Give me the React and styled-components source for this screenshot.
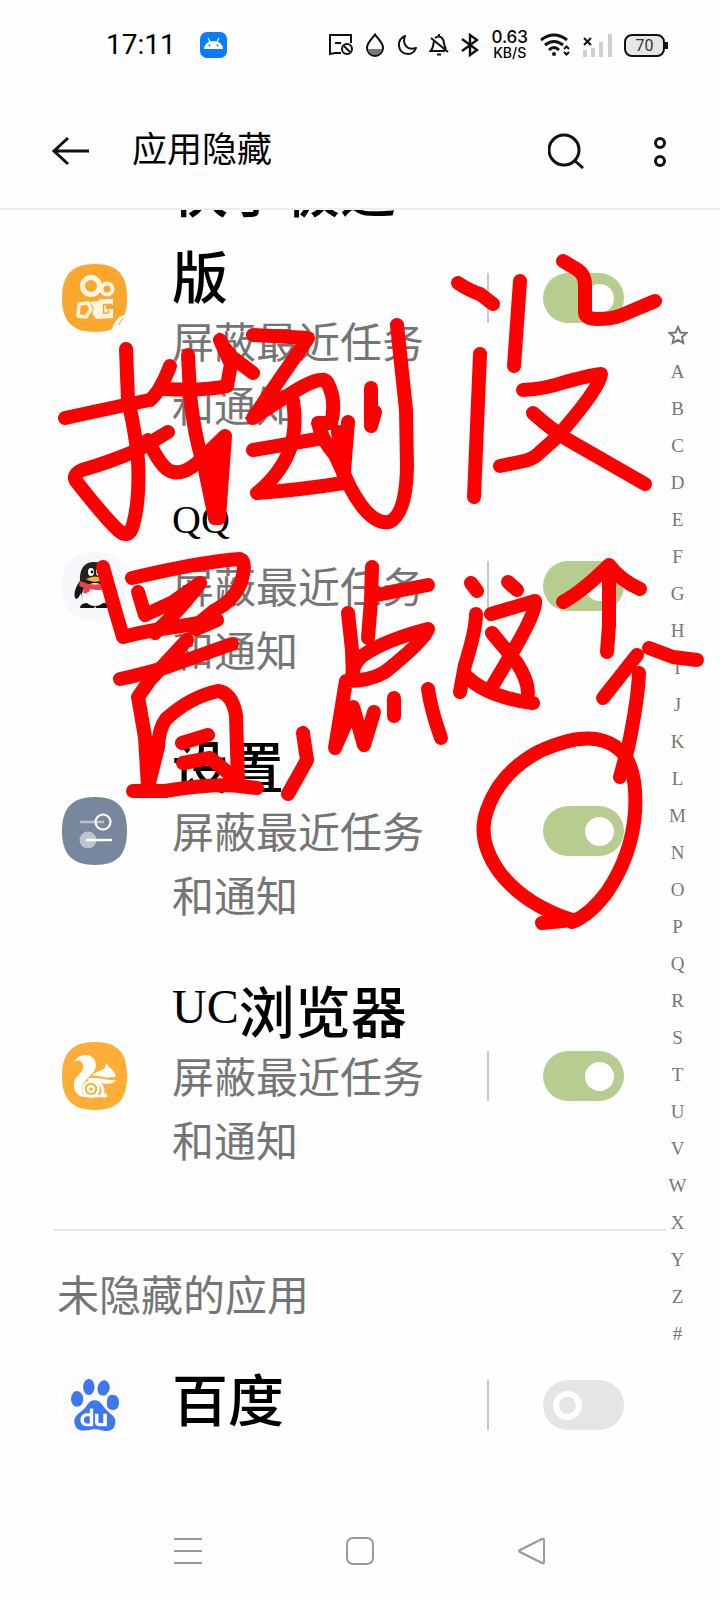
import * as React from "react";
import styled, { createGlobalStyle } from "styled-components";
import { SiBaidu } from "react-icons/si";

const GlobalStyle = createGlobalStyle`
  *, *::before, *::after {
    box-sizing: border-box;
  }
  body {
    margin: 0;
    background: #fefefe;
    font-family: "Liberation Serif", "Noto Sans CJK SC", serif;
    color: #000;
  }
`;

const Page = styled.div`
  position: relative;
  display: flex;
  flex-direction: column;
  min-height: 100vh;
  background: #fefefe;
  overflow: hidden;
`;

const StatusBar = styled.div`
  display: flex;
  align-items: center;
  justify-content: space-between;
  height: 90px;
  padding: 0 55px 0 106px;
  font-family: Roboto, sans-serif;
`;
const StatusLeft = styled.div`
  display: flex;
  align-items: center;
  gap: 24px;
`;
const StatusRight = styled.div`
  display: flex;
  align-items: center;
  gap: 12px;
`;
const Clock = styled.span`
  font-size: 28px;
  line-height: 32px;
`;
const Speed = styled.span`
  display: flex;
  flex-direction: column;
  align-items: center;
  font-family: Inter, sans-serif;
  font-weight: 500;
  font-size: 17px;
  line-height: 15px;
`;
const SpeedUnit = styled.span`
  font-size: 14px;
`;
const Battery = styled.span`
  position: relative;
  display: flex;
  align-items: center;
  justify-content: center;
  width: 41px;
  height: 23px;
  border: 2px solid #111;
  border-radius: 8px;
  background: #e6e6e6;
  font-size: 16px;
  color: #333;
  &::after {
    content: "";
    position: absolute;
    top: 6px;
    right: -5px;
    width: 3px;
    height: 7px;
    background: #111;
  }
`;

const Header = styled.header`
  display: flex;
  align-items: center;
  height: 120px;
  padding: 4px 50px 0 50px;
  border-bottom: 2px solid #ededed;
`;
const IconButton = styled.button`
  display: flex;
  align-items: center;
  justify-content: center;
  padding: 0;
  border: none;
  background: none;
  cursor: pointer;
`;
const PageTitle = styled.h1`
  flex: 1;
  margin: 0 0 0 42px;
  font-size: 35px;
  line-height: 52px;
  font-weight: 400;
`;
const HeaderActions = styled.div`
  display: flex;
  align-items: center;
  gap: 66px;
`;

const Main = styled.main`
  flex: 1;
  display: flex;
  overflow: hidden;
  padding: 0 32px 0 54px;
`;
/* the list is scrolled, its first row runs under the header */
const AppList = styled.div`
  flex: 1;
  min-width: 0;
  margin-top: -78px;
`;
const Row = styled.div`
  display: flex;
  align-items: center;
  padding: 18px 42px 17px 8px;
`;
const AppIcon = styled.svg`
  flex: none;
  width: 66px;
  height: 68px;
`;
const RowText = styled.div`
  flex: 1;
  padding: 0 50px 6px 44px;
`;
const RowTitle = styled.label`
  display: block;
  margin-bottom: -10px;
  font-size: 56px;
  line-height: 86px;
  font-weight: 500;
`;
const Latin = styled.span`
  font-size: ${(props) => props.$size}px;
  line-height: 1;
  font-weight: 400;
  vertical-align: 10px;
`;
const RowNote = styled.p`
  margin: 0;
  font-size: 42px;
  line-height: 64px;
  color: #757575;
`;
const Separator = styled.span`
  flex: none;
  width: 2px;
  height: 50px;
  margin-right: 54px;
  background: #c8c8c8;
`;
const Switch = styled.input`
  appearance: none;
  flex: none;
  display: flex;
  align-items: center;
  width: 81px;
  height: 50px;
  margin: 0;
  padding: 0 10px;
  border-radius: 25px;
  background: #e5e5e5;
  cursor: pointer;
  &::before {
    content: "";
    width: 29px;
    height: 29px;
    border: 6px solid #fff;
    border-radius: 50%;
  }
  &:checked {
    justify-content: flex-end;
    background: #b7cc8f;
  }
  &:checked::before {
    background: #fff;
  }
`;
const SectionTitle = styled.h2`
  margin: 31px 0 0;
  padding: 34px 3px 30px;
  border-top: 2px solid #e6e6e6;
  font-size: 42px;
  line-height: 64px;
  font-weight: 400;
  color: #757575;
`;
const PlainRow = styled(Row)`
  padding-top: 0;
  padding-bottom: 50px;
  ${RowTitle} {
    margin-bottom: 0;
  }
`;

const IndexBar = styled.nav`
  display: flex;
  flex-direction: column;
  width: 23px;
  margin-right: -1px;
  padding-top: 106px;
`;
const IndexLink = styled.a`
  display: flex;
  align-items: center;
  justify-content: center;
  height: 37px;
  font-size: 19px;
  color: #777;
  text-decoration: none;
`;

const NavBar = styled.nav`
  display: flex;
  align-items: center;
  justify-content: center;
  gap: 144px;
  height: 98px;
`;

const Marks = styled.svg`
  position: absolute;
  top: 0;
  left: 0;
  width: 100%;
  pointer-events: none;
  fill: none;
  stroke: #fe0000;
  stroke-width: 14;
  stroke-linecap: round;
  stroke-linejoin: round;
`;

const Stroked = styled.svg`
  flex: none;
  fill: none;
  stroke: ${(props) => props.$color || "#111"};
  stroke-width: ${(props) => props.$weight || 2};
`;

const SQUIRCLE = "M33 0C56 0 65 11 65 34S56 68 33 68S0 57 0 34S10 0 33 0Z";

const KuaishouIcon = () => (
  <AppIcon viewBox="0 0 66 68">
    <path d={SQUIRCLE} fill="#fba62c" />
    <path d="M50 66Q52 54 64 50L66 68H50Z" fill="#fefefe" />
    <path d="M57 61Q58 56 62 54" stroke="#fba62c" strokeWidth="1" fill="none" />
    <g fill="none" stroke="#fff6e2" strokeLinejoin="round">
      <ellipse cx="29" cy="22" rx="8.5" ry="8.5" strokeWidth="5" />
      <circle cx="45" cy="25" r="5.5" strokeWidth="4" />
      <path d="M17 40L26 39L29 45L24 53L16 52Z" strokeWidth="3.5" />
    </g>
    <path d="M28 38L36 37L38 35H51V41H44V45H51V54L34 55L30 49L32 44Z" fill="#fff6e2" />
    <path d="M50 40.5H41.5V49H46.5V45.5" stroke="#fba62c" strokeWidth="1.5" fill="none" />
  </AppIcon>
);

const QQIcon = () => (
  <AppIcon viewBox="0 0 66 68">
    <path d={SQUIRCLE} fill="#f6f6fb" />
    <path d="M18 29C11 38 12 46 14 47C16 47 18 43 19 41C20 46 23 51 25 52H42C46 49 48 44 49 40C52 46 54 47 55 44C56 38 52 33 49 29Z" fill="#151515" />
    <ellipse cx="33" cy="43" rx="13" ry="12" fill="#fff" />
    <path d="M18 30C17 17 22 10 32 10S48 17 48 30Z" fill="#222" />
    <ellipse cx="29" cy="20" rx="3" ry="4" fill="#fff" />
    <ellipse cx="37" cy="20" rx="3" ry="4" fill="#fff" />
    <circle cx="30" cy="20" r="1.4" fill="#111" />
    <circle cx="36" cy="20" r="1.4" fill="#111" />
    <path d="M18 29Q33 36 49 29L50 35Q40 40 28 37L27 42L21 41L22 36L17 34Z" fill="#f0424c" />
    <path d="M24 27Q33 22 42 27Q33 33 24 27Z" fill="#f5b21c" />
    <path d="M18 56Q18 51 27 51H40Q48 51 48 56H34L33 54L32 56Z" fill="#111" />
    <ellipse cx="33" cy="46" rx="10" ry="8" fill="#fff" />
  </AppIcon>
);

const SettingsIcon = () => (
  <AppIcon viewBox="0 0 66 68">
    <path d={SQUIRCLE} fill="#78869e" />
    <path d="M18 25H42" stroke="#b9c2d0" strokeWidth="2.5" />
    <circle cx="41" cy="25" r="7.5" fill="none" stroke="#fff" strokeWidth="2.2" />
    <circle cx="26" cy="43" r="8.5" fill="#bec5d2" />
    <path d="M25 43H49" stroke="#fff" strokeWidth="2.5" strokeLinecap="round" />
  </AppIcon>
);

const UCIcon = () => (
  <AppIcon viewBox="0 0 66 68">
    <path d={SQUIRCLE} fill="#feae37" />
    <g fill="#fff">
      <path d="M12 20C15 13 27 10 32 17C37 25 31 31 27 35C22 40 19 44 20 49C21 52 23 54 25 55C16 56 11 49 12 41C13 33 23 30 21 23C20 18 15 18 12 20Z" />
      <path d="M30 34C34 29 39 29 43 26L44 21L48 26C51 28 53 31 54 34Q52 36 49 35C42 37 37 33 30 34Z" />
      <path d="M28 37C35 34 43 39 54 38Q51 42 45 42C40 42 36 37 28 37Z" />
    </g>
    <g fill="none" stroke="#fff">
      <path d="M26 38C36 36 41 43 41 50L40 53H45" strokeWidth="3" />
      <circle cx="29" cy="47" r="7.5" strokeWidth="2.6" />
      <circle cx="29" cy="47" r="3" strokeWidth="2.4" />
      <path d="M25 54H45" strokeWidth="2.4" />
    </g>
  </AppIcon>
);

const BaiduIcon = () => (
  <AppIcon viewBox="0 0 66 68">
    <path d={SQUIRCLE} fill="#fcfcfe" />
    <SiBaidu x="7" y="8" size={52} color="#3f78ee" />
  </AppIcon>
);

const NOTE = "屏蔽最近任务和通知";

const hiddenApps = [
  { id: "kuaishou", name: "快手极速版", icon: KuaishouIcon },
  { id: "qq", latin: "QQ", size: 40, icon: QQIcon },
  { id: "settings", name: "设置", icon: SettingsIcon },
  { id: "uc", latin: "UC", size: 48, name: "浏览器", icon: UCIcon },
];

const indexLetters = [..."ABCDEFGHIJKLMNOPQRSTUVWXYZ#"];

const marks = [
  "M65 418Q120 406 150 400Q160 392 170 366",
  "M126 349L128 400Q136 435 138 460Q140 500 133 525Q129 540 118 530Q105 518 76 481Q72 475 82 470Q110 462 138 450L168 432",
  "M165 389Q205 391 227 386L231 364L220 340M222 345L232 357L253 373",
  "M188 355L190 395Q195 440 204 465L215 518L219 518L225 436L197 463Q182 476 170 471Q160 466 148 440M208 463L215 500L220 450",
  "M253 335L308 338L253 418L290 394Q322 374 327 382Q337 400 331 423L318 423Q322 440 335 455L350 487Q370 525 389 522Q406 515 407 467L406 410L397 325",
  "M253 450L323 438M293 401Q297 425 291 446Q282 473 257 493Q300 490 343 483L348 422M338 432L343 470",
  "M371 388L371 426L375 412",
  "M458 283Q470 291 480 294L493 304",
  "M520 281L514 366",
  "M480 354L474 497",
  "M563 261L578 270Q585 275 585 285V312Q585 319 597 319Q612 319 622 315L655 301",
  "M523 390Q545 389 565 382Q595 374 601 374Q600 388 557 437L538 454Q533 459 524 461L500 466",
  "M533 413Q553 431 570 441L645 484",
  "M103 567Q112 600 123 637Q150 630 175 627L217 620L196 629",
  "M132 578Q205 561 240 559Q248 562 240 585Q232 602 215 610L193 628",
  "M138 592L145 615L173 602L200 583Q180 610 155 633",
  "M120 679Q140 675 167 667L232 644",
  "M187 640L150 680L138 697L145 737L148 787L158 747Q159 728 166 719Q190 697 218 691Q232 693 236 715L238 783",
  "M182 743L208 735M183 763L210 758L237 780",
  "M133 791H165Q200 785 230 785L257 788",
  "M303 733L307 760L288 794",
  "M372 567L371 600L368 638M377 595L428 585",
  "M348 613L352 650L353 679Q350 667 362 656Q385 640 428 629Q425 640 385 672Q370 681 346 681L335 748L353 707L364 745L374 712",
  "M394 698V716M428 689Q431 710 441 738",
  "M471 583L477 591M508 582L517 590",
  "M476 614Q476 630 465 665L460 692M466 676Q487 697 533 703",
  "M491 614L535 601Q537 610 515 648L490 690M492 633L517 663Q528 680 528 693",
  "M563 602Q583 591 609 565Q620 580 640 589M609 567V625L607 652",
  "M649 648L673 657L697 660M637 655L603 698",
  "M639 673Q638 700 628 748L620 777",
  "M542 923L572 920Q525 905 500 873Q476 840 487 810Q500 772 540 751Q590 728 616 747Q638 762 635 812Q632 855 607 892Q590 915 572 922",
];

const StatusIcons = () => (
  <>
    <Stroked width="24" height="24" viewBox="0 0 24 24">
      <path d="M22 10V2H1V21L6 20H12M6 10H12" />
      <circle cx="18" cy="16" r="5" />
      <path d="M15 13L21 19" />
    </Stroked>
    <Stroked width="20" height="24" viewBox="0 0 20 24">
      <path d="M3 16H17Q15 22 10 22T3 16Z" fill="#777" stroke="none" />
      <path d="M10 1.5C8 5 2 9 2 15A8 8 0 0 0 18 15C18 9 12 5 10 1.5Z" />
    </Stroked>
    <Stroked width="20" height="24" viewBox="0 0 20 24">
      <path d="M8 3C-1 6 0 21 11 21C15 21 18 18 19 15C10 18 5 11 8 3Z" strokeLinejoin="round" />
    </Stroked>
    <Stroked width="20" height="24" viewBox="0 0 20 24">
      <path d="M5 8C4 13 4 16 1.5 18H16M6 5Q10 2 13 5C16 8 14 12 17 16M10 1V4M8 21.5H12M2 5L19 19" />
    </Stroked>
    <Stroked width="18" height="24" viewBox="0 0 18 24" $weight={2.4}>
      <path d="M1 6L16 17L9 22V2L16 7L1 18" />
    </Stroked>
  </>
);

const NetworkIcons = () => (
  <>
    <Stroked width="30" height="25" viewBox="0 0 30 25" $weight={3}>
      <path d="M1 7Q14 -3 27 7M5 12Q14 5 23 12M9 17Q14 12 19 17" />
      <circle cx="14" cy="21" r="2" fill="#111" stroke="none" />
      <path d="M24 16L26.5 13.5L29 16M24 19L26.5 21.5L29 19" strokeWidth="2" />
    </Stroked>
    <Stroked width="30" height="25" viewBox="0 0 30 25" $color="#cfcfcf" $weight={4}>
      <path d="M3 24V17M11 24V15M19 24V9M28 24V1" />
      <path d="M2 5L9 12M9 5L2 12" stroke="#111" strokeWidth="2" />
    </Stroked>
  </>
);

export default function App() {
  return (
    <>
      <GlobalStyle />
      <Page>
        <StatusBar>
          <StatusLeft>
            <Clock>17:11</Clock>
            <svg width="27" height="26" viewBox="0 0 27 26">
              <rect width="27" height="26" rx="7" fill="#0a7bfb" />
              <path d="M4 17Q5 9 13.5 9T23 17Z" fill="#fff" />
              <path d="M8 6L10 10M19 6L17 10" stroke="#fff" strokeWidth="1.2" />
              <circle cx="9.5" cy="13.5" r="1" fill="#0a7bfb" />
              <circle cx="17.5" cy="13.5" r="1" fill="#0a7bfb" />
            </svg>
          </StatusLeft>
          <StatusRight>
            <StatusIcons />
            <Speed>
              0.63
              <SpeedUnit>KB/S</SpeedUnit>
            </Speed>
            <NetworkIcons />
            <Battery>70</Battery>
          </StatusRight>
        </StatusBar>

        <Header>
          <IconButton aria-label="返回">
            <Stroked width="40" height="32" viewBox="0 0 40 32" $weight={3}>
              <path d="M18 3L4 16L18 29M4 16H39" />
            </Stroked>
          </IconButton>
          <PageTitle>应用隐藏</PageTitle>
          <HeaderActions>
            <IconButton aria-label="搜索">
              <Stroked width="36" height="36" viewBox="0 0 36 36" $weight={3}>
                <circle cx="16" cy="17" r="15" />
                <path d="M26 27L35 35" />
              </Stroked>
            </IconButton>
            <IconButton aria-label="更多">
              <Stroked width="20" height="36" viewBox="0 0 20 36" $weight={3}>
                <circle cx="10" cy="10" r="4.5" />
                <circle cx="10" cy="28" r="4.5" />
              </Stroked>
            </IconButton>
          </HeaderActions>
        </Header>

        <Main>
          <AppList>
            {hiddenApps.map(({ id, name, latin, size, icon: Icon }) => (
              <Row key={id}>
                <Icon />
                <RowText>
                  <RowTitle htmlFor={id}>
                    {latin && <Latin $size={size}>{latin}</Latin>}
                    {name}
                  </RowTitle>
                  <RowNote>{NOTE}</RowNote>
                </RowText>
                <Separator />
                <Switch type="checkbox" id={id} defaultChecked />
              </Row>
            ))}
            <SectionTitle>未隐藏的应用</SectionTitle>
            <PlainRow>
              <BaiduIcon />
              <RowText>
                <RowTitle htmlFor="baidu">百度</RowTitle>
              </RowText>
              <Separator />
              <Switch type="checkbox" id="baidu" />
            </PlainRow>
          </AppList>
          <IndexBar>
            <IndexLink href="#top" aria-label="收藏">
              <Stroked width="20" height="20" viewBox="0 0 20 20" $color="#777">
                <path d="M10 2L12.4 7.5L18.5 8L14 12L15.3 18L10 15L4.7 18L6 12L1.5 8L7.6 7.5Z" />
              </Stroked>
            </IndexLink>
            {indexLetters.map((letter) => (
              <IndexLink key={letter} href={`#${letter}`}>
                {letter}
              </IndexLink>
            ))}
          </IndexBar>
        </Main>

        <NavBar>
          <IconButton aria-label="菜单">
            <Stroked width="28" height="28" viewBox="0 0 28 28" $color="#999">
              <path d="M0 2H28M0 14H28M0 26H28" />
            </Stroked>
          </IconButton>
          <IconButton aria-label="主页">
            <Stroked width="28" height="28" viewBox="0 0 28 28" $color="#999">
              <rect x="1" y="1" width="26" height="26" rx="6" />
            </Stroked>
          </IconButton>
          <IconButton aria-label="后退">
            <Stroked width="28" height="28" viewBox="0 0 28 28" $color="#999">
              <path d="M24 2Q26 1 26 3V25Q26 27 24 26L2 15Q0 14 2 13Z" />
            </Stroked>
          </IconButton>
        </NavBar>

        <Marks viewBox="0 0 720 1600" role="img" aria-label="找到设置,点这个">
          {marks.map((d) => (
            <path key={d} d={d} />
          ))}
        </Marks>
      </Page>
    </>
  );
}
